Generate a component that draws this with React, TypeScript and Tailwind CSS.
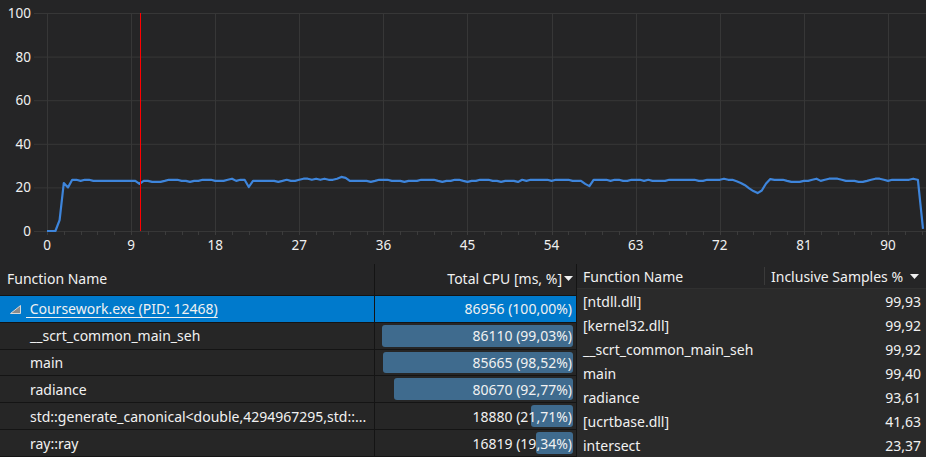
import React from 'react'

const FONT = { fontFamily: '"Noto Sans", "Open Sans", sans-serif' }

// chart geometry
const X0 = 47
const PX_PER_SEC = 84.1 / 9
const Y0 = 231
const PX_PER_PCT = 2.18
const sx = (t: number) => X0 + t * PX_PER_SEC
const sy = (v: number) => Y0 - v * PX_PER_PCT

// a few spots that stand out in the trace
const spikes: [number, number][] = [
  [9.9, 21.6],
  [21.6, 20.2],
  [31.5, 24.8],
  [32.0, 24.4],
  [58.0, 20.6],
  [57.6, 21.6]
]

const dip = [22.8, 22, 21, 19.6, 18.3, 17.4, 18.6, 21.8, 23.8]

function buildSeries() {
  let seed = 12468
  const rnd = () => {
    seed = (seed * 1103515245 + 12345) % 2147483648
    return seed / 2147483648
  }
  const pts: [number, number][] = []
  const step = 0.45
  let v = 23
  for (let i = 0; ; i++) {
    const t = i * step
    if (t > 93.2) break
    let val: number
    if (t < 1.3) val = 0
    else if (t < 1.7) val = 5
    else if (t < 2.1) val = 22
    else if (t < 2.5) val = 20
    else if (t > 73.4 && t < 73.4 + dip.length * step) {
      val = dip[Math.min(dip.length - 1, Math.floor((t - 73.4) / step))]
    } else {
      const r = rnd()
      if (r < 0.25) v -= 0.6
      else if (r > 0.75) v += 0.6
      v += (23.2 - v) * 0.35
      v = Math.max(22, Math.min(24.2, v))
      val = Math.round(v * 2) / 2
      const s = spikes.find(([st]) => Math.abs(st - t) < step / 2)
      if (s) val = s[1]
    }
    pts.push([t, val])
  }
  pts.push([93.2, 23.5])
  pts.push([93.75, 1])
  return pts
}

const series = buildSeries()

function Chart() {
  const yTicks = [0, 20, 40, 60, 80, 100]
  const xTicks = [0, 9, 18, 27, 36, 45, 54, 63, 72, 81, 90]
  const minor: number[] = []
  for (let t = 0; t <= 94; t += 1.8) minor.push(t)
  return (
    <svg width={926} height={264} className="block" style={FONT}>
      {yTicks.map(v => (
        <line key={'h' + v} x1={34} x2={926} y1={sy(v) + 0.5} y2={sy(v) + 0.5} stroke="#373737" strokeWidth={1} />
      ))}
      {xTicks.map(t => (
        <line key={'v' + t} x1={Math.round(sx(t)) + 0.5} x2={Math.round(sx(t)) + 0.5} y1={13} y2={Y0 + 4} stroke="#373737" strokeWidth={1} />
      ))}
      {minor.map(t => (
        <line key={'m' + t} x1={Math.round(sx(t)) + 0.5} x2={Math.round(sx(t)) + 0.5} y1={Y0} y2={Y0 + 4} stroke="#3c3c3c" strokeWidth={1} />
      ))}
      {yTicks.map(v => (
        <text key={'yl' + v} x={31} y={sy(v) + 5} textAnchor="end" fontSize={13.5} fill="#f0f0f0">
          {v}
        </text>
      ))}
      {xTicks.map(t => (
        <text key={'xl' + t} x={sx(t)} y={250} textAnchor="middle" fontSize={13.5} fill="#f0f0f0">
          {t}
        </text>
      ))}
      <polyline
        points={series.map(([t, v]) => `${sx(t).toFixed(1)},${sy(v).toFixed(1)}`).join(' ')}
        fill="none"
        stroke="#3e85db"
        strokeWidth={2.2}
        strokeLinejoin="round"
      />
      <line x1={140.5} x2={140.5} y1={13} y2={Y0} stroke="#ff0000" strokeWidth={1} />
    </svg>
  )
}

const callTree = [
  { name: '__scrt_common_main_seh', ms: 86110, pct: 99.03 },
  { name: 'main', ms: 85665, pct: 98.52 },
  { name: 'radiance', ms: 80670, pct: 92.77 },
  { name: 'std::generate_canonical<double,4294967295,std::...', ms: 18880, pct: 21.71 },
  { name: 'ray::ray', ms: 16819, pct: 19.34 }
]

const hotPaths = [
  { name: '[ntdll.dll]', val: '99,93' },
  { name: '[kernel32.dll]', val: '99,92' },
  { name: '__scrt_common_main_seh', val: '99,92' },
  { name: 'main', val: '99,40' },
  { name: 'radiance', val: '93,61' },
  { name: '[ucrtbase.dll]', val: '41,63' },
  { name: 'intersect', val: '23,37' }
]

const fmt = (p: number) => p.toFixed(2).replace('.', ',')

function SortArrow() {
  return (
    <svg width={9} height={5} viewBox="0 0 9 5" className="shrink-0">
      <polygon points="0,0 9,0 4.5,5" fill="#f0f0f0" />
    </svg>
  )
}

function CallTree() {
  return (
    <div className="w-[577px] shrink-0 flex flex-col text-[14px] text-[#f1f1f1]">
      <div className="flex h-[32px] border-b border-[#141414] bg-[#252526]">
        <div className="w-[375px] border-r border-[#141414] flex items-center pl-[7px] pb-[1px]">Function Name</div>
        <div className="w-[202px] border-r border-[#141414] flex items-center justify-end gap-[2px] pr-[3px] pb-[1px]">
          <span>Total CPU [ms, %]</span>
          <SortArrow />
        </div>
      </div>
      <div className="flex h-[27px] border-b border-[#141414] bg-[#007acc]">
        <div className="w-[375px] border-r border-[#141414] flex items-center pl-[10px] gap-[5px]">
          <svg width={11} height={9} viewBox="0 0 11 9" className="shrink-0 mt-[2px]">
            <polygon points="0.5,8.5 10.5,0.5 10.5,8.5" fill="#8a8a8a" stroke="#d8d8d8" strokeWidth={1} />
          </svg>
          <span className="underline underline-offset-[3px] whitespace-pre">{' Coursework.exe (PID: 12468)'}</span>
        </div>
        <div className="w-[202px] border-r border-[#141414] flex items-center justify-end pr-[4px]">86956 (100,00%)</div>
      </div>
      {callTree.map(r => (
        <div key={r.name} className="flex h-[27px] border-b border-[#141414] bg-[#262626]">
          <div className="w-[375px] border-r border-[#141414] flex items-center pl-[30px] whitespace-nowrap overflow-hidden">
            {r.name}
          </div>
          <div className="relative w-[202px] border-r border-[#141414] flex items-center justify-end pr-[4px]">
            <div
              className="absolute right-[3px] top-[2px] bottom-[2px] rounded-[3px] bg-[#3f6b8e]"
              style={{ width: Math.round(193 * r.pct / 100) }}
            />
            <span className="relative">
              {r.ms} ({fmt(r.pct)}%)
            </span>
          </div>
        </div>
      ))}
    </div>
  )
}

function HotPath() {
  return (
    <div className="flex-1 flex flex-col text-[14px] text-[#f1f1f1] bg-[#2a2a2a]">
      <div className="flex h-[25px] bg-[#252526] border-b border-[#303030]">
        <div className="w-[188px] flex items-center pl-[6px] border-r border-[#3a3a3a] my-[3px]">Function Name</div>
        <div className="flex-1 flex items-center pl-[6px] pr-[7px]">
          <span className="flex-1">Inclusive Samples %</span>
          <SortArrow />
        </div>
      </div>
      {hotPaths.map(r => (
        <div key={r.name} className="flex h-[24px] items-center pl-[6px] pr-[5px]">
          <span className="flex-1">{r.name}</span>
          <span>{r.val}</span>
        </div>
      ))}
    </div>
  )
}

export default function App() {
  return (
    <div className="w-[926px] h-[457px] overflow-hidden bg-[#252526] flex flex-col" style={FONT}>
      <Chart />
      <div className="flex flex-1 min-h-0">
        <CallTree />
        <HotPath />
      </div>
    </div>
  )
}
